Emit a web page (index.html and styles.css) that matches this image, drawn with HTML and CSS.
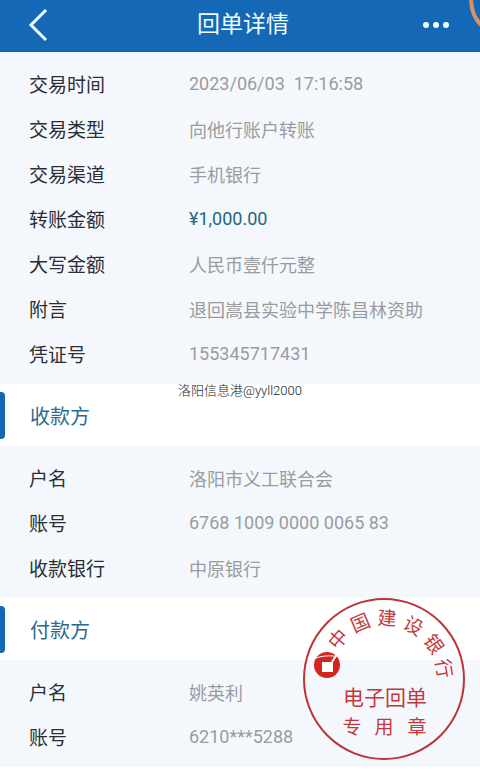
FILE: index.html
```html
<!DOCTYPE html>
<html lang="zh-CN">
  <head>
    <meta charset="UTF-8" />
    <meta name="viewport" content="width=device-width, initial-scale=1.0" />
    <title>回单详情</title>
    <link rel="stylesheet" href="styles.css">
  </head>
  <body>
    <header class="topbar">
      <button type="button" class="icon-btn back" aria-label="返回">
        <svg width="20" height="32" viewBox="0 0 20 32">
          <path d="M18 1 L3 16 L18 31" fill="none" stroke="#eefcff" stroke-width="3" />
        </svg>
      </button>
      <h1>回单详情</h1>
      <button type="button" class="icon-btn" aria-label="更多">
        <svg width="28" height="8" viewBox="0 0 28 8" fill="#f2fdff">
          <circle cx="4" cy="4" r="3" />
          <circle cx="14" cy="4" r="3" />
          <circle cx="24" cy="4" r="3" />
        </svg>
      </button>
      <svg class="corner" width="12" height="28" viewBox="0 0 12 28">
        <path d="M3 -2 C3 10 6 18 13 25" fill="none" stroke="#d79264" stroke-width="4" />
      </svg>
    </header>

    <main>
      <section>
        <dl class="rows">
          <div class="row"><dt>交易时间</dt><dd>2023/06/03  17:16:58</dd></div>
          <div class="row"><dt>交易类型</dt><dd>向他行账户转账</dd></div>
          <div class="row"><dt>交易渠道</dt><dd>手机银行</dd></div>
          <div class="row"><dt>转账金额</dt><dd class="amount">¥1,000.00</dd></div>
          <div class="row"><dt>大写金额</dt><dd>人民币壹仟元整</dd></div>
          <div class="row"><dt>附言</dt><dd>退回嵩县实验中学陈昌林资助</dd></div>
          <div class="row"><dt>凭证号</dt><dd>155345717431</dd></div>
        </dl>
      </section>

      <section class="party">
        <span class="watermark">洛阳信息港@yyll2000</span>
        <h2>收款方</h2>
        <dl class="rows">
          <div class="row"><dt>户名</dt><dd>洛阳市义工联合会</dd></div>
          <div class="row"><dt>账号</dt><dd>6768 1009 0000 0065 83</dd></div>
          <div class="row"><dt>收款银行</dt><dd>中原银行</dd></div>
        </dl>
      </section>

      <section class="party">
        <h2>付款方</h2>
        <dl class="rows">
          <div class="row"><dt>户名</dt><dd>姚英利</dd></div>
          <div class="row"><dt>账号</dt><dd>6210***5288</dd></div>
        </dl>
        <svg class="seal" width="164" height="164" viewBox="0 0 164 164">
          <circle cx="82" cy="82" r="80" fill="none" stroke="#bd3338" stroke-width="2" />
          <g class="seal-arc">
            <text x="82" y="28" transform="rotate(-49 82 82)">中</text>
            <text x="82" y="28" transform="rotate(-23 82 82)">国</text>
            <text x="82" y="28" transform="rotate(3 82 82)">建</text>
            <text x="82" y="28" transform="rotate(29 82 82)">设</text>
            <text x="82" y="28" transform="rotate(55 82 82)">银</text>
            <text x="82" y="28" transform="rotate(80 82 82)">行</text>
          </g>
          <!-- coin logo -->
          <circle cx="25" cy="68" r="13" fill="#d3241f" />
          <rect x="20" y="65" width="11" height="10" fill="#fff" />
          <path d="M12 62 Q20 58 32 59" fill="none" stroke="#fff" stroke-width="1" />
          <path d="M30 65 L35 57" stroke="#fff" stroke-width="2" />
          <text class="seal-main" x="83" y="108">电子回单</text>
          <g class="seal-sub">
            <text x="50" y="137">专</text>
            <text x="82" y="137">用</text>
            <text x="115" y="137">章</text>
          </g>
        </svg>
      </section>
    </main>
  </body>
</html>
```
FILE: styles.css
```css
* {
  box-sizing: border-box;
}
body {
  margin: 0;
  background-color: #fff;
  font-family: Roboto, "Noto Sans CJK SC", sans-serif;
}
h1,
h2,
dl,
dd {
  margin: 0;
  font-weight: 400;
}

.topbar {
  position: relative;
  display: flex;
  align-items: center;
  justify-content: space-between;
  height: 52px;
  padding: 0 30px 2px 28px;
  background-color: #1568b5;
  border-bottom: 1px solid #175f9c;
}
.topbar h1 {
  color: #effcff;
  font-size: 23px;
  line-height: 32px;
}
.icon-btn {
  display: flex;
  align-items: center;
  width: 28px;
  height: 32px;
  padding: 0;
  border: 0;
  background: none;
}
.back {
  width: 36px;
}
.corner {
  position: absolute;
  top: 0;
  right: 0;
}

.rows {
  padding: 9px 29px 8px;
  background-color: #f4f8fc;
}
.row {
  display: flex;
  align-items: center;
  height: 45px;
}
.row dt {
  width: 160px;
  color: #2b2e33;
  font-size: 19px;
}
.row dd {
  color: #999c9f;
  font-size: 18px;
  white-space: pre;
}
.row .amount {
  color: #27657f;
}

.party {
  position: relative;
}
.party h2 {
  display: flex;
  align-items: center;
  height: 62px;
  color: #2b6a8c;
  font-size: 20px;
}
.party h2::before {
  content: "";
  width: 5px;
  height: 47px;
  margin-right: 25px;
  border-radius: 0 4px 4px 0;
  background-color: #1568b5;
}
.watermark {
  position: absolute;
  top: 0;
  left: 0;
  right: 0;
  color: #222;
  font-size: 13px;
  font-weight: 300;
  line-height: 14px;
  text-align: center;
}

.seal {
  position: absolute;
  top: -1px;
  right: 14px;
  fill: #c2393c;
  font-family: "Noto Sans CJK SC", sans-serif;
  text-anchor: middle;
}
.seal-arc {
  font-size: 19px;
}
.seal-main {
  font-size: 21px;
}
.seal-sub {
  font-size: 19px;
}
```
